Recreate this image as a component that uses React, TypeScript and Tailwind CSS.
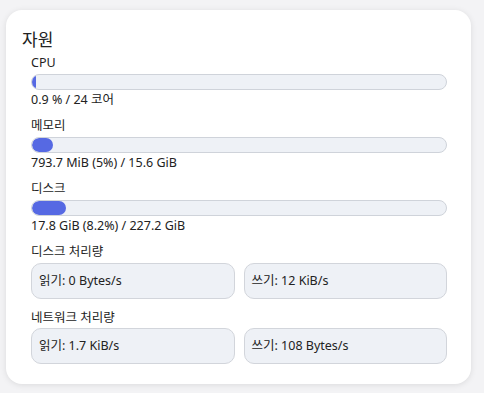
import React from 'react';

const font = { fontFamily: '"Noto Sans", "Noto Sans CJK KR", sans-serif' };

function Bar({ percent }: { percent: number }) {
  return (
    <div className="mt-[2px] h-4 w-full rounded-full border border-[#cfd3da] bg-[#eef1f6] overflow-hidden">
      <div className="h-full rounded-full bg-[#5669e3]" style={{ width: `${percent}%` }} />
    </div>
  );
}

function Meter({ label, percent, value }: { label: string; percent: number; value: string }) {
  return (
    <div className="flex flex-col">
      <div className="leading-[18px]">{label}</div>
      <Bar percent={percent} />
      <div className="mt-[1px] leading-[18px]">{value}</div>
    </div>
  );
}

function Throughput({ label, read, write, gap }: { label: string; read: string; write: string; gap: string }) {
  return (
    <div className="flex flex-col">
      <div className="leading-[18px]">{label}</div>
      <div className={`${gap} grid grid-cols-2 gap-[9px]`}>
        <div className="flex h-9 items-center rounded-[10px] border border-[#d2d5db] bg-[#eef1f6] px-[7px]">
          {read}
        </div>
        <div className="flex h-9 items-center rounded-[10px] border border-[#d2d5db] bg-[#eef1f6] px-[7px]">
          {write}
        </div>
      </div>
    </div>
  );
}

export default function App() {
  return (
    <div className="min-h-[393px] w-[484px] bg-[#f3f3f5] pt-[10px] pl-[6px]" style={font}>
      <div className="w-[465px] rounded-2xl bg-white pt-[18px] pb-[20px] px-4 shadow-[0_1px_6px_rgba(0,0,0,0.10)] text-[#222]">
        <h2 className="text-[17px] leading-6">자원</h2>
        <div className="mt-[2px] flex flex-col gap-2 pl-[9px] pr-2 text-[12.5px]">
          <Meter label="CPU" percent={0.9} value="0.9 % / 24 코어" />
          <Meter label="메모리" percent={5} value="793.7 MiB (5%) / 15.6 GiB" />
          <Meter label="디스크" percent={8.2} value="17.8 GiB (8.2%) / 227.2 GiB" />
          <Throughput label="디스크 처리량" read="읽기: 0 Bytes/s" write="쓰기: 12 KiB/s" gap="mt-[2px]" />
          <div className="mt-[2px]">
            <Throughput label="네트워크 처리량" read="읽기: 1.7 KiB/s" write="쓰기: 108 Bytes/s" gap="mt-[1px]" />
          </div>
        </div>
      </div>
    </div>
  );
}
